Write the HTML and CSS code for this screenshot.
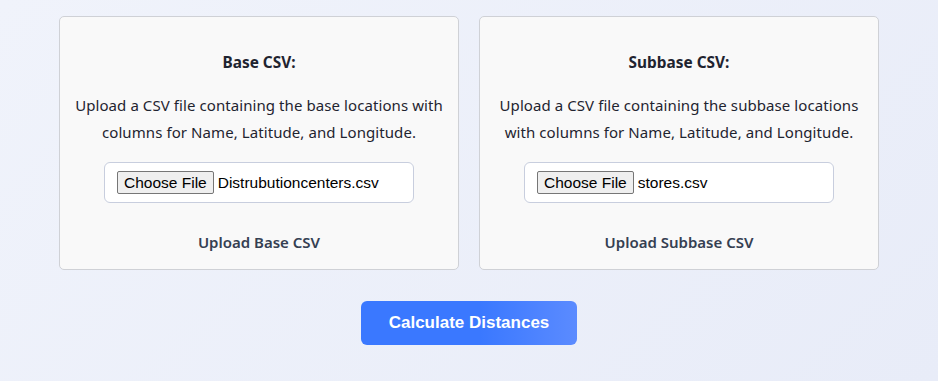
FILE: index.html
```html
<!DOCTYPE html>
<html lang="en">
<head>
  <meta charset="UTF-8" />
  <meta name="viewport" content="width=device-width, initial-scale=1.0"/>
  <title>CSV Distance Calculator</title>
  <link rel="stylesheet" href="styles.css">
</head>
<body>
  <div class="uploads">
    <div class="upload-card">
      <h3>Base CSV:</h3>
      <p>Upload a CSV file containing the base locations with columns for Name, Latitude, and Longitude.</p>
      <div class="file-box">
        <span class="file-button">Choose File</span>
        <span class="file-name">Distrubutioncenters.csv</span>
      </div>
      <button class="upload-btn">Upload Base CSV</button>
    </div>

    <div class="upload-card">
      <h3>Subbase CSV:</h3>
      <p>Upload a CSV file containing the subbase locations with columns for Name, Latitude, and Longitude.</p>
      <div class="file-box">
        <span class="file-button">Choose File</span>
        <span class="file-name">stores.csv</span>
      </div>
      <button class="upload-btn">Upload Subbase CSV</button>
    </div>
  </div>

  <button class="calc-btn">Calculate Distances</button>
</body>
</html>
```

FILE: styles.css
```css
body {
  margin: 0;
  min-height: 381px;
  font-family: 'Noto Sans', sans-serif;
  color: #1f2430;
  background: linear-gradient(135deg, #f0f3fb 0%, #e8ecf8 100%);
  display: flex;
  flex-direction: column;
  align-items: center;
}

.uploads {
  display: flex;
  gap: 20px;
  margin-top: 16px;
}

.upload-card {
  width: 368px;
  padding: 20px 15px 8px;
  background-color: #f9f9f9;
  border: 1px solid #cfd1d6;
  border-radius: 5px;
  text-align: center;
}

.upload-card h3 {
  margin: 13px 0 0;
  font-size: 15.4px;
  line-height: 26px;
  font-weight: 700;
}

.upload-card p {
  margin: 16px 0 0;
  font-size: 15px;
  line-height: 27px;
  letter-spacing: 0.08px;
}

.file-box {
  width: 284px;
  height: 39px;
  margin: 16px auto 0;
  padding: 0 12px;
  display: flex;
  align-items: center;
  gap: 4px;
  background-color: #ffffff;
  border: 1px solid #c8cede;
  border-radius: 6px;
  font-family: 'Liberation Sans', Arial, sans-serif;
  font-size: 15.5px;
  color: #000000;
}

.file-button {
  padding: 1px 6px;
  line-height: 19px;
  background-color: #efefef;
  border: 1px solid #767676;
  border-radius: 2px;
}

.upload-btn {
  margin-top: 20px;
  padding: 8px 16px;
  background: none;
  border: none;
  font-family: 'Noto Sans', sans-serif;
  font-size: 15px;
  line-height: 22px;
  font-weight: 600;
  color: #354052;
  cursor: pointer;
}

.calc-btn {
  margin-top: 31px;
  width: 216px;
  height: 44px;
  border: none;
  border-radius: 6px;
  background: linear-gradient(90deg, #3a78ff 0%, #3a78ff 55%, #5b8bff 100%);
  color: #ffffff;
  font-family: 'Liberation Sans', Arial, sans-serif;
  font-size: 17px;
  font-weight: 700;
  cursor: pointer;
}
```
